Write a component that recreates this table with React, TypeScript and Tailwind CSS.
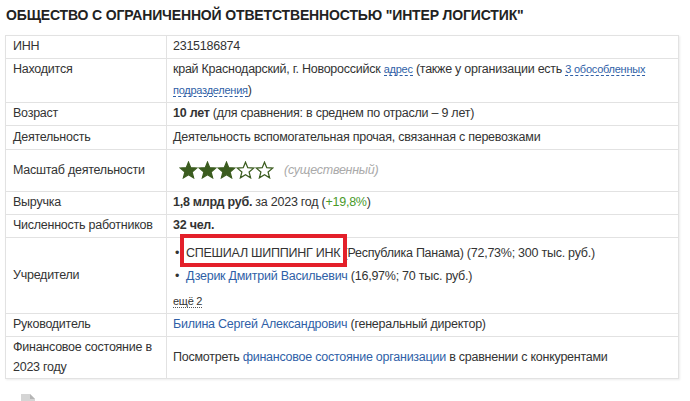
import React from 'react';

const linkCls = 'text-[#2f5fa7]';
const dashCls = 'text-[11px] border-b border-dashed border-[#2f5fa7] text-[#2f5fa7] leading-none';

const Star = ({ filled }: { filled: boolean }) => (
  <svg width="19" height="18" viewBox="0 0 24 23" className="shrink-0">
    <polygon
      points="12,1.5 14.9,8.6 22.5,9.1 16.6,14 18.5,21.5 12,17.4 5.5,21.5 7.4,14 1.5,9.1 9.1,8.6"
      fill={filled ? '#3b5c1f' : 'white'}
      stroke="#3b5c1f"
      strokeWidth="1.6"
      strokeLinejoin="miter"
    />
  </svg>
);

const Row = ({
  label,
  children,
  top = false,
  lead = 'leading-[21px]',
}: {
  label: React.ReactNode;
  children: React.ReactNode;
  top?: boolean;
  lead?: string;
}) => (
  <tr>
    <td
      className={`border border-[#e2e2e2] pl-[7px] pr-1 pb-px whitespace-nowrap ${lead} ${
        top ? 'align-top' : 'align-middle'
      }`}
    >
      {label}
    </td>
    <td className="border border-[#e2e2e2] pl-[6px] pr-2 pb-px leading-[21px] align-middle">
      {children}
    </td>
  </tr>
);

export default function App() {
  return (
    <div className="w-[690px] h-[401px] overflow-hidden bg-white text-[#333] text-[12.5px] tracking-[-0.25px] font-['Liberation_Sans',Arial,sans-serif]">
      <h1 className="pl-[6px] pt-[5px] text-[14px] tracking-[-0.15px] font-bold text-[#222] leading-[20px]">
        ОБЩЕСТВО С ОГРАНИЧЕННОЙ ОТВЕТСТВЕННОСТЬЮ "ИНТЕР ЛОГИСТИК"
      </h1>

      <table className="ml-[5px] mt-[10px] w-[674px] table-fixed border-collapse shadow-[1px_1px_2px_rgba(0,0,0,0.08)]">
        <colgroup>
          <col className="w-[161px]" />
          <col />
        </colgroup>
        <tbody>
          <Row label="ИНН">2315186874</Row>
          <Row label="Находится" top>
            край Краснодарский, г. Новороссийск <span className={dashCls}>адрес</span> (также у
            организации есть <span className={dashCls}>3 обособленных</span>
            <br />
            <span className={dashCls}>подразделения</span>)
          </Row>
          <Row label="Возраст">
            <b>10 лет</b> (для сравнения: в среднем по отрасли – 9 лет)
          </Row>
          <Row label="Деятельность">
            <div className="h-[22px] leading-[22px]">
              Деятельность вспомогательная прочая, связанная с перевозками
            </div>
          </Row>
          <Row label="Масштаб деятельности">
            <div className="flex items-center h-[40px] pl-[6px]">
              <Star filled />
              <Star filled />
              <Star filled />
              <Star filled={false} />
              <Star filled={false} />
              <span className="ml-[10px] italic text-[#aaa]">(существенный)</span>
            </div>
          </Row>
          <Row label="Выручка">
            <b>1,8 млрд руб.</b> за 2023 год (<span className="text-[#4a9a2a]">+19,8%</span>)
          </Row>
          <Row label="Численность работников">
            <b>32 чел.</b>
          </Row>
          <Row label="Учредители">
            <div className="pt-[5px]">
              <div className="flex h-[21px]">
                <span className="w-[13px] pl-[2px]">•</span>
                <span className="whitespace-nowrap">
                  <span className="relative">
                    СПЕШИАЛ ШИППИНГ ИНК
                    <span className="absolute -left-[6px] -right-[7px] -top-[12px] -bottom-[7px] border-[4px] border-[#e3202a]" />
                  </span>{' '}
                  (Республика Панама) (72,73%; 300 тыс. руб.)
                </span>
              </div>
              <div className="flex h-[21px] mt-[2px]">
                <span className="w-[13px] pl-[2px]">•</span>
                <span>
                  <span className={linkCls}>Дзерик Дмитрий Васильевич</span> (16,97%; 70 тыс. руб.)
                </span>
              </div>
              <div className="h-[21px] mt-[4px]">
                <span className="text-[11px] border-b border-dotted border-[#555] leading-none">
                  ещё 2
                </span>
              </div>
            </div>
          </Row>
          <Row label="Руководитель">
            <span className={linkCls}>Билина Сергей Александрович</span> (генеральный директор)
          </Row>
          <Row
            lead="leading-[20px]"
            label={
              <>
                Финансовое состояние в
                <br />
                2023 году
              </>
            }
          >
            Посмотреть <span className={linkCls}>финансовое состояние организации</span> в сравнении с
            конкурентами
          </Row>
        </tbody>
      </table>

      <div className="mt-[15px] pl-[21px]">
        <svg width="14" height="16" viewBox="0 0 14 16">
          <path d="M0 0 H9 L14 5 V16 H0 Z" fill="#d5d5d5" />
          <path d="M9 0 V5 H14 Z" fill="#b5b5b5" />
        </svg>
      </div>
    </div>
  );
}
